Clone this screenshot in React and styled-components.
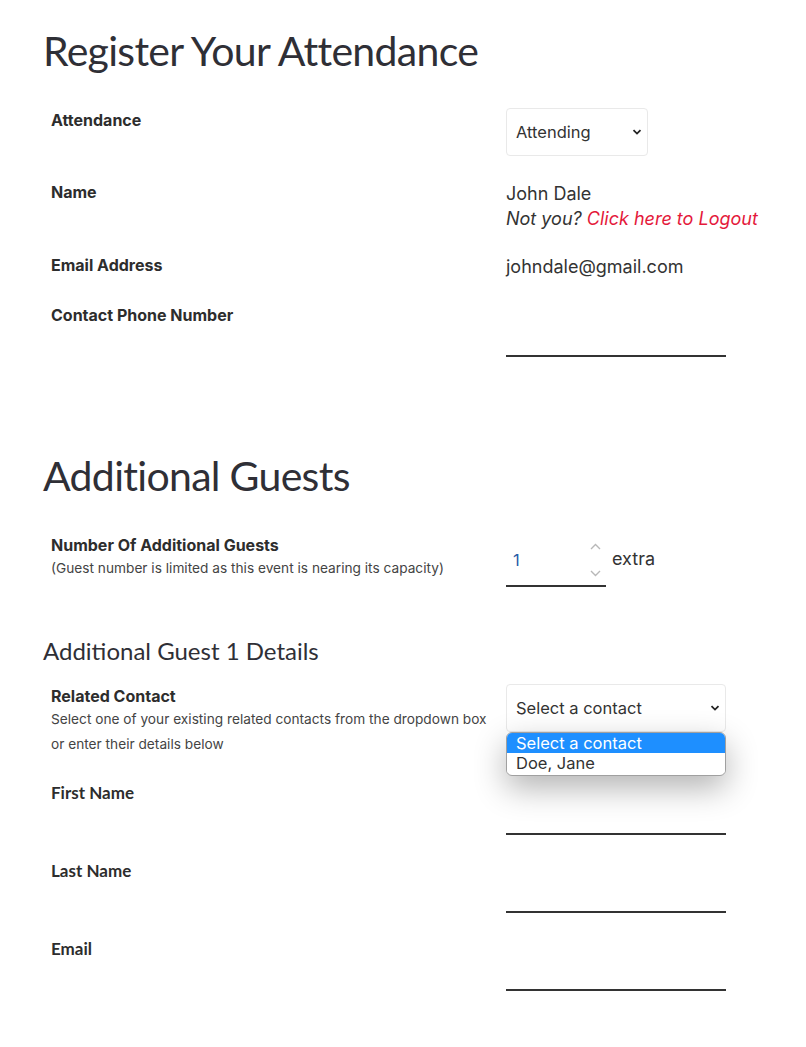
import React from "react";
import styled, { createGlobalStyle } from "styled-components";

const Global = createGlobalStyle`
  html, body { margin: 0; padding: 0; background: #fff; }
  body { font-family: Inter, "Open Sans", sans-serif; color: #333; }
  * { box-sizing: border-box; }
`;

const Page = styled.div`
  padding: 26px 43px 40px 43px;
`;

const Heading = styled.h1`
  font-family: Lato, "Open Sans", sans-serif;
  font-weight: 400;
  font-size: ${(p) => (p.$small ? "24px" : "41px")};
  letter-spacing: ${(p) => (p.$small ? "0" : "-0.7px")};
  line-height: 1.2;
  color: #2f2f36;
  margin: ${(p) => p.$m};
`;

const Row = styled.div`
  display: grid;
  grid-template-columns: 455px 220px;
  padding-left: 8px;
  margin-bottom: ${(p) => p.$mb ?? "25px"};
`;

const LabelCol = styled.div`
  display: flex;
  flex-direction: column;
  padding-top: ${(p) => p.$pt || "0"};
`;

const Label = styled.div`
  font-weight: 700;
  line-height: 22px;
  color: #2d2d2d;
  font-family: ${(p) => (p.$alt ? "Lato, sans-serif" : "Inter, sans-serif")};
  font-size: ${(p) => (p.$alt ? "17px" : "16px")};
`;

const Help = styled.div`
  font-size: 13.7px;
  line-height: 25px;
  color: #444;
  white-space: nowrap;
`;

const Value = styled.div`
  font-size: 18px;
  line-height: 25px;
  color: #333;
  white-space: nowrap;
`;

const Italic = styled.div`
  font-size: 18px;
  line-height: 25px;
  font-style: italic;
  color: #333;
  white-space: nowrap;
`;

const Link = styled.a`
  color: #e4193b;
  text-decoration: none;
`;

const SelectWrap = styled.div`
  position: relative;
  width: ${(p) => p.$w};
  height: 48px;
  border: 1px solid #e9e9e9;
  border-radius: 4px;
  display: flex;
  align-items: center;
  padding-left: 9px;
  font-size: 16.5px;
  color: #333;
  background: #fff;
`;

const Chevron = styled.svg`
  position: absolute;
  right: 5px;
  top: 50%;
  margin-top: -5px;
`;

const UnderInput = styled.div`
  width: ${(p) => p.$w || "220px"};
  height: 53px;
  border-bottom: 2px solid #333;
  position: relative;
  display: flex;
  align-items: center;
  padding-left: 7px;
  font-size: 16.5px;
  color: #2a5ca8;
`;

const InputLine = styled.div`
  display: flex;
  align-items: flex-start;
  gap: 6px;
`;

const Extra = styled.span`
  font-size: 18px;
  line-height: 25px;
  margin-top: 12px;
  color: #333;
`;

const Spinner = styled.div`
  position: absolute;
  right: 5px;
  top: 9px;
  display: flex;
  flex-direction: column;
  gap: 20px;
`;

const Dropdown = styled.div`
  position: absolute;
  left: -1px;
  top: 47px;
  width: 220px;
  background: #fff;
  border: 1px solid #a0a0a0;
  border-radius: 6px;
  overflow: hidden;
  box-shadow: 0 12px 32px rgba(0, 0, 0, 0.3);
  padding-bottom: 2px;
  z-index: 5;
`;

const Option = styled.div`
  height: 20px;
  line-height: 20px;
  padding-left: 9px;
  font-size: 16.5px;
  background: ${(p) => (p.$active ? "#1e8fff" : "#fff")};
  color: ${(p) => (p.$active ? "#fff" : "#333")};
`;

const ChevronIcon = () => (
  <Chevron width="10" height="10" viewBox="0 0 10 10">
    <path d="M1.5 3.2 L5 6.6 L8.5 3.2" fill="none" stroke="#222" strokeWidth="1.8" />
  </Chevron>
);

const SmallArrow = ({ up }) => (
  <svg width="11" height="7" viewBox="0 0 11 7">
    <path
      d={up ? "M1 6 L5.5 1.5 L10 6" : "M1 1 L5.5 5.5 L10 1"}
      fill="none"
      stroke="#b8b8b8"
      strokeWidth="1.4"
    />
  </svg>
);

export default function App() {
  return (
    <Page>
      <Global />
      <Heading $m="0 0 33px 0">Register Your Attendance</Heading>

      <Row>
        <LabelCol $pt="1px">
          <Label>Attendance</Label>
        </LabelCol>
        <div>
          <SelectWrap $w="142px">
            Attending
            <ChevronIcon />
          </SelectWrap>
        </div>
      </Row>

      <Row $mb="23px">
        <LabelCol>
          <Label>Name</Label>
        </LabelCol>
        <div>
          <Value>John Dale</Value>
          <Italic>
            Not you? <Link href="#">Click here to Logout</Link>
          </Italic>
        </div>
      </Row>

      <Row $mb="25px">
        <LabelCol>
          <Label>Email Address</Label>
        </LabelCol>
        <div>
          <Value>johndale@gmail.com</Value>
        </div>
      </Row>

      <Row>
        <LabelCol>
          <Label>Contact Phone Number</Label>
        </LabelCol>
        <div>
          <UnderInput />
        </div>
      </Row>

      <Heading $m="94px 0 34px 0">Additional Guests</Heading>

      <Row>
        <LabelCol>
          <Label>Number Of Additional Guests</Label>
          <Help>(Guest number is limited as this event is nearing its capacity)</Help>
        </LabelCol>
        <InputLine>
          <UnderInput $w="100px">
            1
            <Spinner>
              <SmallArrow up />
              <SmallArrow />
            </Spinner>
          </UnderInput>
          <Extra>extra</Extra>
        </InputLine>
      </Row>

      <Heading $small $m="50px 0 18px 0">Additional Guest 1 Details</Heading>

      <Row>
        <LabelCol $pt="1px">
          <Label>Related Contact</Label>
          <Help>Select one of your existing related contacts from the dropdown box</Help>
          <Help>or enter their details below</Help>
        </LabelCol>
        <div>
          <SelectWrap $w="220px">
            Select a contact
            <ChevronIcon />
            <Dropdown>
              <Option $active>Select a contact</Option>
              <Option>Doe, Jane</Option>
            </Dropdown>
          </SelectWrap>
        </div>
      </Row>

      <Row>
        <LabelCol>
          <Label $alt>First Name</Label>
        </LabelCol>
        <div>
          <UnderInput />
        </div>
      </Row>

      <Row>
        <LabelCol>
          <Label $alt>Last Name</Label>
        </LabelCol>
        <div>
          <UnderInput />
        </div>
      </Row>

      <Row>
        <LabelCol>
          <Label $alt>Email</Label>
        </LabelCol>
        <div>
          <UnderInput />
        </div>
      </Row>
    </Page>
  );
}
